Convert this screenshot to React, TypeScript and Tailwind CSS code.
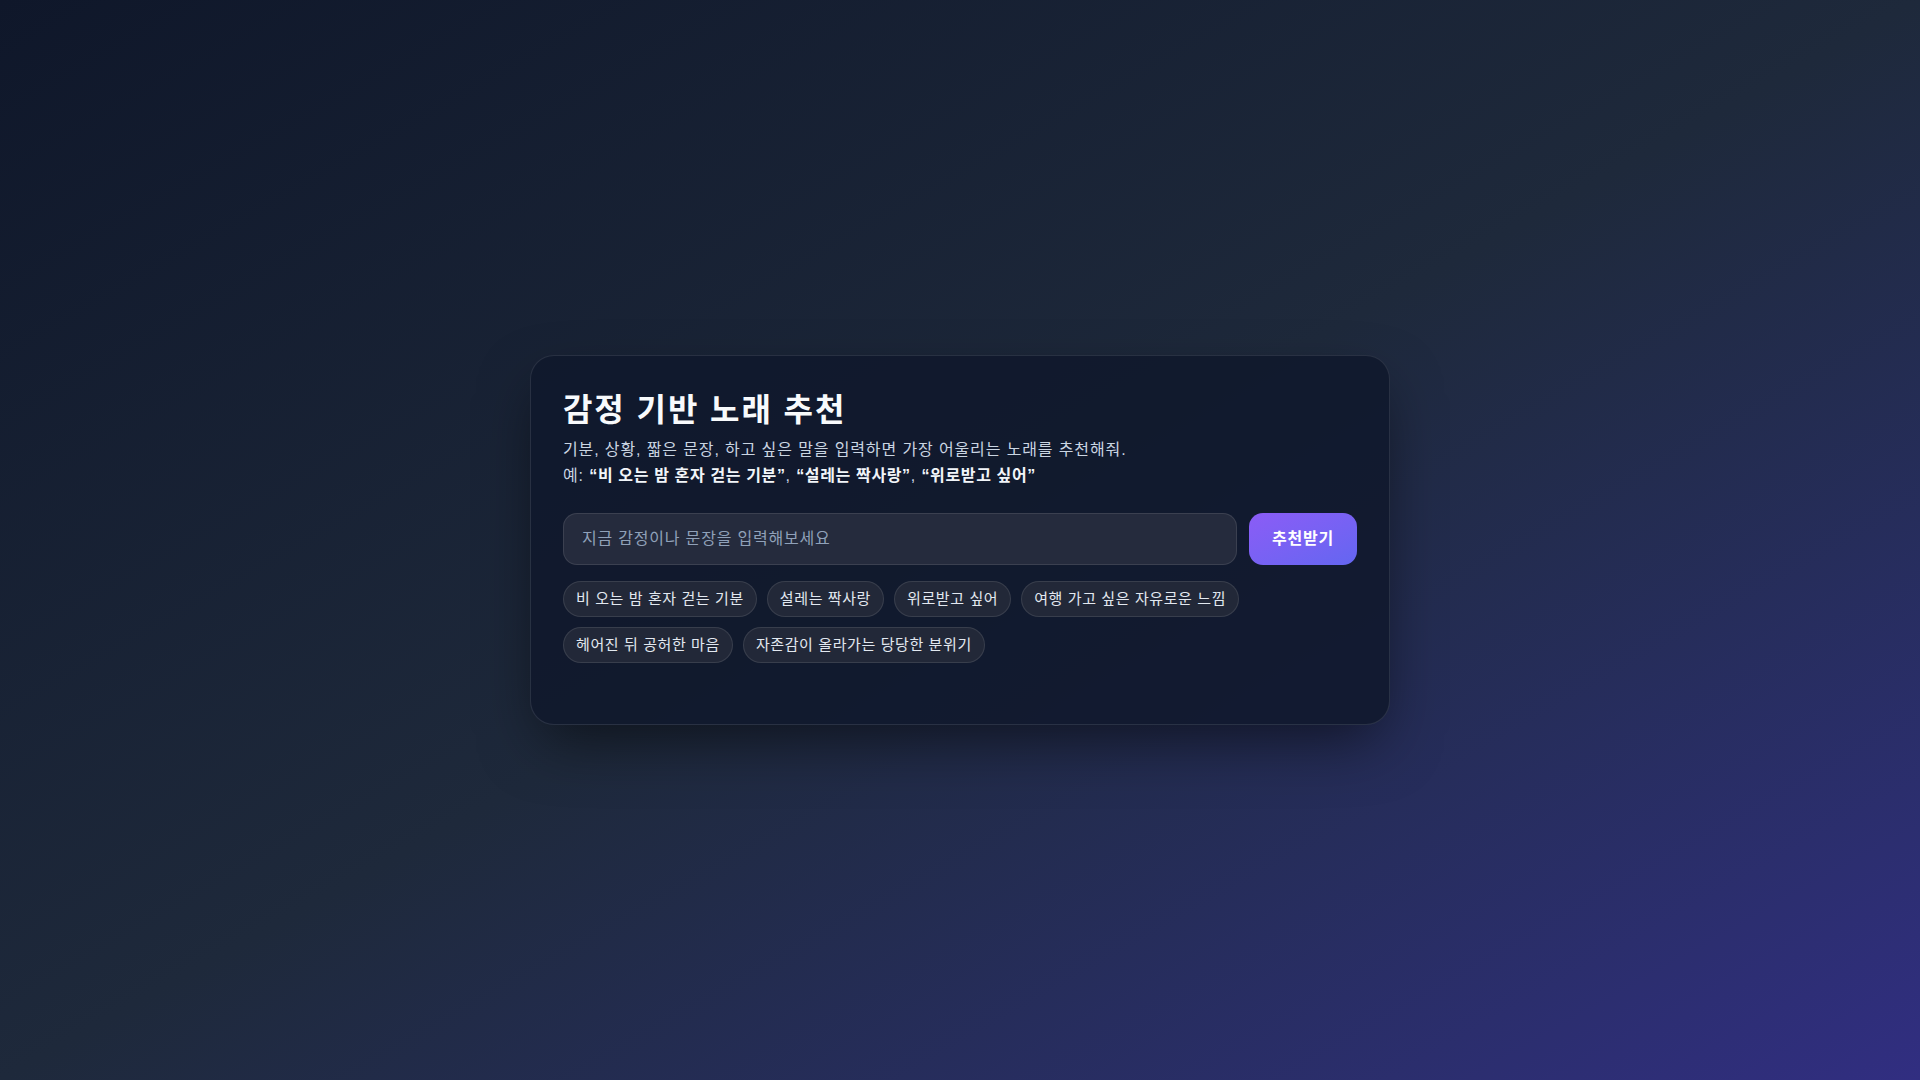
import { useState } from "react";

const EXAMPLES = [
  "비 오는 밤 혼자 걷는 기분",
  "설레는 짝사랑",
  "위로받고 싶어",
  "여행 가고 싶은 자유로운 느낌",
  "헤어진 뒤 공허한 마음",
  "자존감이 올라가는 당당한 분위기",
];

export default function App() {
  const [text, setText] = useState("");

  return (
    <div className="flex min-h-screen items-center justify-center bg-gradient-to-br from-[#0f172a] via-[#1e293b] to-[#312e81] font-['Liberation_Sans','Noto_Sans_CJK_JP',sans-serif]">
      <div className="w-[860px] rounded-3xl border border-white/10 bg-slate-900/85 px-8 pt-[35px] pb-8 shadow-[0_24px_60px_-12px_rgba(0,0,0,0.55)]">
        <h1 className="text-[32px] font-bold leading-[38px] tracking-[0.06em] text-slate-50">감정 기반 노래 추천</h1>
        <p className="mt-2 text-[16px] leading-[26px] tracking-[0.055em] text-slate-300">
          기분, 상황, 짧은 문장, 하고 싶은 말을 입력하면 가장 어울리는 노래를 추천해줘.
          <br />
          예: <b className="font-bold tracking-[0.04em] text-slate-100">“비 오는 밤 혼자 걷는 기분”</b>,{" "}
          <b className="font-bold tracking-[0.04em] text-slate-100">“설레는 짝사랑”</b>,{" "}
          <b className="font-bold tracking-[0.04em] text-slate-100">“위로받고 싶어”</b>
        </p>

        <div className="mt-6 flex gap-3">
          <input
            value={text}
            onChange={(e) => setText(e.target.value)}
            placeholder="지금 감정이나 문장을 입력해보세요"
            className="h-[52px] flex-1 rounded-[14px] border border-white/10 bg-[#252b3d] px-[18px] text-[16px] tracking-[0.05em] text-slate-100 outline-none placeholder:text-slate-400"
          />
          <button className="h-[52px] rounded-[14px] bg-gradient-to-br from-[#8b5cf6] to-[#6366f1] px-[23px] text-[16px] font-bold tracking-[0.05em] text-white">
            추천받기
          </button>
        </div>

        <div className="mt-4 flex flex-wrap gap-2.5">
          {EXAMPLES.map((ex) => (
            <button
              key={ex}
              onClick={() => setText(ex)}
              className="h-9 rounded-full border border-white/10 bg-[#222838] px-3 text-[15px] tracking-[0.04em] text-slate-200"
            >
              {ex}
            </button>
          ))}
        </div>

        {/* 추천 결과 영역 */}
        <div className="mt-[29px]" />
      </div>
    </div>
  );
}
